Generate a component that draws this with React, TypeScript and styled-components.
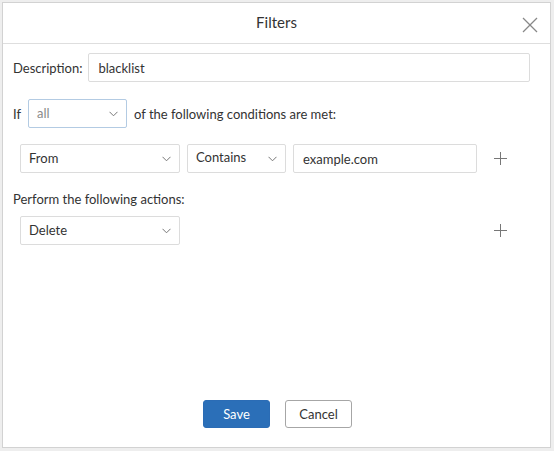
import React from 'react';
import styled, { createGlobalStyle } from 'styled-components';

const GlobalStyle = createGlobalStyle`
    html, body {
        margin: 0;
        padding: 0;
        background: #eeeeee;
        font-family: Lato, "Open Sans", Arial, sans-serif;
        color: #333;
    }
`;

const Page = styled.div`
    width: 554px;
    height: 451px;
    padding: 2px 0 0 2px;
    box-sizing: border-box;
`;

const Dialog = styled.div`
    width: 549px;
    height: 446px;
    box-sizing: border-box;
    background: #fff;
    border: 1px solid #d2d2d2;
    display: flex;
    flex-direction: column;
`;

const Header = styled.div`
    height: 41px;
    box-sizing: border-box;
    border-bottom: 1px solid #dedede;
    display: grid;
    grid-template-columns: 40px 1fr 40px;
    align-items: start;
`;

const Title = styled.div`
    grid-column: 2;
    text-align: center;
    font-size: 15px;
    line-height: 18px;
    padding-top: 10px;
    color: #333;
`;

const CloseButton = styled.button`
    grid-column: 3;
    justify-self: start;
    margin: 14px 0 0 12px;
    padding: 0;
    border: 0;
    background: none;
    width: 16px;
    height: 16px;
    display: flex;
`;

const Body = styled.div`
    flex: 1;
    padding: 9px 20px 0 10px;
    display: flex;
    flex-direction: column;
`;

const Row = styled.div<{ $top: number; $indent?: number }>`
    display: flex;
    align-items: center;
    margin-top: ${(p) => p.$top}px;
    padding-left: ${(p) => p.$indent || 0}px;
`;

const Label = styled.span<{ $gap?: number }>`
    font-size: 13px;
    color: #333;
    margin-right: ${(p) => p.$gap || 0}px;
    white-space: nowrap;
`;

const Caption = styled.div<{ $top: number }>`
    font-size: 13px;
    line-height: 16px;
    margin-top: ${(p) => p.$top}px;
`;

const TextInput = styled.input<{ $width?: number }>`
    box-sizing: border-box;
    height: 29px;
    ${(p) => (p.$width ? `width: ${p.$width}px;` : 'flex: 1; min-width: 0;')}
    border: 1px solid #dcdcdc;
    border-radius: 2px;
    padding: 0 9px;
    font-family: inherit;
    font-size: 13px;
    color: #333;
    background: #fff;
    outline: none;
`;

const SelectBox = styled.div<{ $width: number; $focus?: boolean; $muted?: boolean }>`
    box-sizing: border-box;
    width: ${(p) => p.$width}px;
    height: 29px;
    border: 1px solid ${(p) => (p.$focus ? '#b3cbe3' : '#dcdcdc')};
    border-radius: 2px;
    display: flex;
    align-items: center;
    justify-content: space-between;
    padding: 0 8px 0 8px;
    font-size: 13px;
    color: ${(p) => (p.$muted ? '#8a8a8a' : '#333')};
    margin-right: 7px;
    flex-shrink: 0;
`;

const SelectText = styled.span<{ $lift?: number }>`
    position: relative;
    top: -${(p) => p.$lift || 1}px;
`;

const PlusButton = styled.button`
    margin-left: auto;
    margin-right: 23px;
    padding: 0;
    border: 0;
    background: none;
    width: 13px;
    height: 13px;
    display: flex;
`;

const Footer = styled.div`
    display: flex;
    justify-content: center;
    gap: 15px;
    padding: 0 0 19px 2px;
`;

const Button = styled.button<{ $primary?: boolean }>`
    box-sizing: border-box;
    width: 67px;
    height: 28px;
    border-radius: 3px;
    font-family: inherit;
    font-size: 13px;
    cursor: pointer;
    border: 1px solid ${(p) => (p.$primary ? '#2b6cb5' : '#a6a6a6')};
    background: ${(p) => (p.$primary ? '#2b6fb8' : '#fff')};
    color: ${(p) => (p.$primary ? '#fff' : '#333')};
`;

const Chevron = () => (
    <svg width="9" height="6" viewBox="0 0 9 6">
        <polyline points="0.5,0.8 4.5,4.8 8.5,0.8" fill="none" stroke="#777" strokeWidth="1" />
    </svg>
);

const Plus = () => (
    <svg width="13" height="13" viewBox="0 0 13 13">
        <line x1="6.5" y1="0" x2="6.5" y2="13" stroke="#777" strokeWidth="1" />
        <line x1="0" y1="6.5" x2="13" y2="6.5" stroke="#777" strokeWidth="1" />
    </svg>
);

const Select = ({ value, width, focus, muted, lift }: { value: string; width: number; focus?: boolean; muted?: boolean; lift?: number }) => (
    <SelectBox $width={width} $focus={focus} $muted={muted}>
        <SelectText $lift={lift}>{value}</SelectText>
        <Chevron />
    </SelectBox>
);

function App() {
    return (
        <Page>
            <GlobalStyle />
            <Dialog>
                <Header>
                    <Title>Filters</Title>
                    <CloseButton aria-label="Close">
                        <svg width="16" height="16" viewBox="0 0 16 16">
                            <line x1="1" y1="1" x2="15" y2="15" stroke="#888" strokeWidth="1.2" />
                            <line x1="15" y1="1" x2="1" y2="15" stroke="#888" strokeWidth="1.2" />
                        </svg>
                    </CloseButton>
                </Header>
                <Body>
                    <Row $top={0}>
                        <Label $gap={6}>Description:</Label>
                        <TextInput readOnly value="blacklist" />
                    </Row>
                    <Row $top={17}>
                        <Label $gap={7}>If</Label>
                        <Select value="all" width={99} focus muted />
                        <Label>of the following conditions are met:</Label>
                    </Row>
                    <Row $top={16} $indent={7}>
                        <Select value="From" width={160} />
                        <Select value="Contains" width={99} lift={2} />
                        <TextInput readOnly value="example.com" $width={184} />
                        <PlusButton aria-label="Add condition">
                            <Plus />
                        </PlusButton>
                    </Row>
                    <Caption $top={18}>Perform the following actions:</Caption>
                    <Row $top={9} $indent={7}>
                        <Select value="Delete" width={160} />
                        <PlusButton aria-label="Add action">
                            <Plus />
                        </PlusButton>
                    </Row>
                </Body>
                <Footer>
                    <Button $primary>Save</Button>
                    <Button>Cancel</Button>
                </Footer>
            </Dialog>
        </Page>
    );
}

export default App;
